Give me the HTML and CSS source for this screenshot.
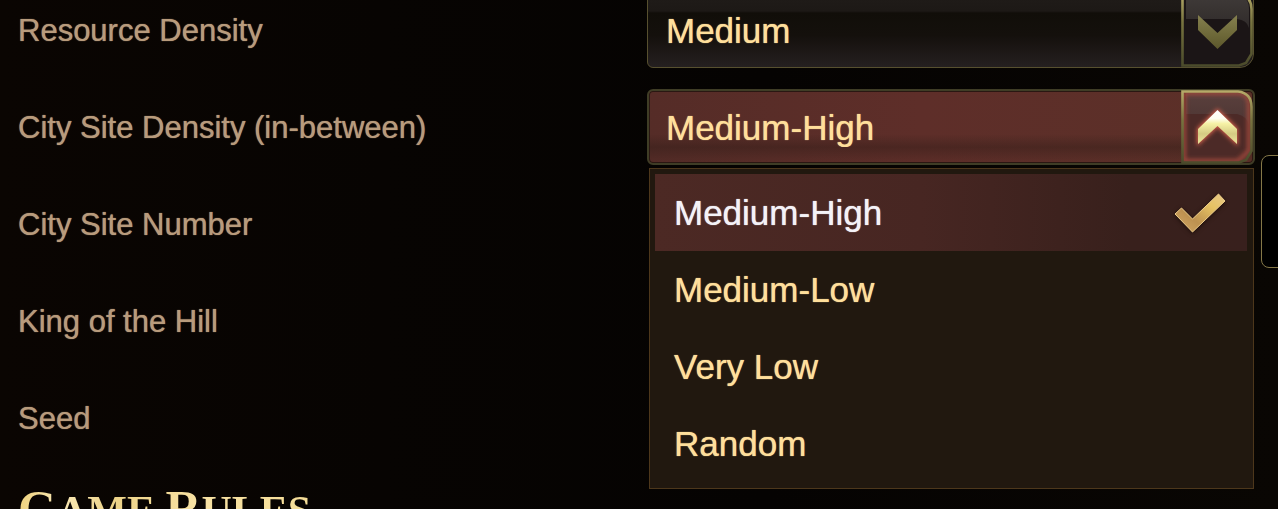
FILE: index.html
```html
<!DOCTYPE html>
<html lang="en">
<head>
    <meta charset="UTF-8">
    <title>Game Setup</title>
    <link rel="stylesheet" href="styles.css">
</head>
<body>
    <main class="settings">
        <div class="row">
            <label for="resource-density">Resource Density</label>
            <div class="dropdown">
                <select id="resource-density">
                    <option>Medium</option>
                </select>
                <svg class="arrow" viewBox="0 0 72 76" aria-hidden="true">
                    <defs>
                        <linearGradient id="frame" x1="0" y1="0" x2="0" y2="1">
                            <stop offset="0" stop-color="#b5aa68"/>
                            <stop offset="0.4" stop-color="#77733f"/>
                            <stop offset="1" stop-color="#4b4b2b"/>
                        </linearGradient>
                        <linearGradient id="shine" x1="0" y1="0" x2="0" y2="1">
                            <stop offset="0" stop-color="#3f3a38"/>
                            <stop offset="1" stop-color="#302b2a"/>
                        </linearGradient>
                        <linearGradient id="olive" x1="0" y1="0" x2="0" y2="1">
                            <stop offset="0" stop-color="#85804f"/>
                            <stop offset="0.6" stop-color="#6d6838"/>
                            <stop offset="1" stop-color="#5c572c"/>
                        </linearGradient>
                    </defs>
                    <path d="M1.5 1.5H57Q70.5 4 70.5 17V62L65 71L58 73.5H1.5Z" fill="#1b1516"/>
                    <path d="M5 4H57Q68 5 68 17V36Q66 28 56 27H5Z" fill="url(#shine)"/>
                    <path d="M1.5 1.5H57Q70.5 4 70.5 17V62L65 71L58 73.5H1.5Z" fill="none" stroke="url(#frame)" stroke-width="2.6"/>
                    <path d="M17 23L36.5 41L56 23V38L36.5 57L17 38Z" fill="url(#olive)"/>
                </svg>
            </div>
        </div>
        <div class="row">
            <label for="site-density">City Site Density (in-between)</label>
            <div class="dropdown open">
                <select id="site-density">
                    <option>Medium-High</option>
                    <option>Medium-Low</option>
                    <option>Very Low</option>
                    <option>Random</option>
                </select>
                <svg class="arrow" viewBox="0 0 72 76" aria-hidden="true">
                    <defs>
                        <linearGradient id="shine-red" x1="0" y1="0" x2="0" y2="1">
                            <stop offset="0" stop-color="#5a403d"/>
                            <stop offset="1" stop-color="#4d3533"/>
                        </linearGradient>
                        <linearGradient id="lit" x1="0" y1="0" x2="0" y2="1">
                            <stop offset="0" stop-color="#ffffff"/>
                            <stop offset="0.25" stop-color="#fffef0"/>
                            <stop offset="0.4" stop-color="#f6f2a6"/>
                            <stop offset="0.7" stop-color="#d5cb83"/>
                            <stop offset="1" stop-color="#eee59c"/>
                        </linearGradient>
                        <filter id="glow" x="-40%" y="-40%" width="180%" height="180%">
                            <feGaussianBlur stdDeviation="2"/>
                        </filter>
                        <clipPath id="inside">
                            <path d="M1.5 2.5H57Q70.5 4 70.5 18V62L65 71L58 73.5H1.5Z"/>
                        </clipPath>
                    </defs>
                    <path d="M1.5 2.5H57Q70.5 4 70.5 18V62L65 71L58 73.5H1.5Z" fill="#4c2a27"/>
                    <path d="M5 4H57Q68 5 68 17V36Q66 27 56 25H5Z" fill="url(#shine-red)"/>
                    <g clip-path="url(#inside)">
                        <path d="M3 3V72H57L68 62V18Q69 4 57 4H3" fill="none" stroke="#a14a3c" stroke-width="4" filter="url(#glow)"/>
                    </g>
                    <path d="M1.5 2.5H57Q70.5 4 70.5 18V62L65 71L58 73.5H1.5Z" fill="none" stroke="url(#frame)" stroke-width="2.6"/>
                    <path d="M17 40L36.5 21L56 40V55L36.5 37L17 55Z" fill="#d5604c" stroke="#d5604c" stroke-width="2" filter="url(#glow)"/>
                    <path d="M17 40L36.5 21L56 40V55L36.5 37L17 55Z" fill="url(#lit)"/>
                </svg>
                <ul class="menu" role="listbox" aria-label="City Site Density (in-between)">
                    <li><button type="button" role="option" aria-selected="true" class="option selected">Medium-High
                        <svg class="check" viewBox="0 0 52 40" aria-hidden="true">
                            <defs>
                                <linearGradient id="gold" x1="0" y1="1" x2="1" y2="0">
                                    <stop offset="0" stop-color="#d5aa68"/>
                                    <stop offset="0.35" stop-color="#bd9150"/>
                                    <stop offset="0.7" stop-color="#e6c263"/>
                                    <stop offset="1" stop-color="#e8c989"/>
                                </linearGradient>
                            </defs>
                            <path d="M1 21L7.5 15L18.5 26L44.5 1L51 8L18.5 39Z" fill="url(#gold)" stroke="#f0cf8d" stroke-width="1"/>
                        </svg>
                    </button></li>
                    <li><button type="button" role="option" aria-selected="false" class="option">Medium-Low</button></li>
                    <li><button type="button" role="option" aria-selected="false" class="option">Very Low</button></li>
                    <li><button type="button" role="option" aria-selected="false" class="option">Random</button></li>
                </ul>
            </div>
        </div>
        <div class="row"><span class="name">City Site Number</span></div>
        <div class="row"><span class="name">King of the Hill</span></div>
        <div class="row"><span class="name">Seed</span></div>
        <h2><span class="cap">G</span>AME <span class="cap">R</span>ULES</h2>
    </main>
    <!-- edge of the next panel -->
    <div class="side-panel"></div>
</body>
</html>
```
FILE: styles.css
```css
* {
    box-sizing: border-box;
}
body {
    margin: 0;
    height: 100vh;
    overflow: hidden;
    position: relative;
    background: linear-gradient(90deg, #0a0502 0%, #070402 30%, #050302 60%, #090603 100%);
    font-family: "Liberation Sans", Arial, sans-serif;
}
/* the list is scrolled a little, so the first row is cut */
.settings {
    display: flex;
    flex-direction: column;
    gap: 21px;
    margin-top: -8px;
    padding: 0 24px 0 18px;
}
.row {
    display: grid;
    grid-template-columns: 1fr 1fr;
    column-gap: 22px;
    align-items: center;
    min-height: 76px;
}
label,
.name {
    padding-top: 2px;
    color: #b89b7c;
    font-size: 31px;
    line-height: 36px;
    text-shadow: 0 0 1px #b89b7c;
}
.dropdown {
    position: relative;
    height: 76px;
}
select {
    appearance: none;
    width: 100%;
    height: 100%;
    margin: 0;
    padding: 0 80px 0 18px;
    border: 1px solid #57502f;
    border-radius: 6px 6px 14px 6px;
    background: linear-gradient(#201c19 0, #1d1916 18px, #110e09 20px, #14100c 42px, #252020 100%);
    color: #ffdf9b;
    font-family: inherit;
    font-size: 35px;
    text-shadow: 0 0 1px #ffdf9b;
}
.open select {
    width: calc(100% + 1px);
    border: 2px solid #3f3d26;
    border-radius: 6px;
    padding-left: 17px;
    background: linear-gradient(rgba(30, 12, 10, 0) 60%, rgba(30, 20, 15, 0.3) 78%, rgba(30, 12, 10, 0) 100%),
        linear-gradient(90deg, #552c27, #5e2e29 45%, #5b3028);
    box-shadow: inset 0 0 0 1px #2a1712;
}
.arrow {
    position: absolute;
    top: 0;
    right: 1px;
    width: 72px;
    height: 76px;
    pointer-events: none;
}
.menu {
    position: absolute;
    top: calc(100% + 3px);
    left: 2px;
    right: 0;
    z-index: 1;
    margin: 0;
    padding: 5px 6px 6px 5px;
    list-style: none;
    border: 1px solid #4d371b;
    background: #21180f;
}
.option {
    display: flex;
    justify-content: space-between;
    align-items: center;
    width: 100%;
    height: 77px;
    padding: 0 21px 0 19px;
    border: 0;
    background: none;
    color: #ffdf9b;
    font-family: inherit;
    font-size: 35px;
    text-align: left;
    text-shadow: 0 0 1px #ffdf9b;
}
.selected {
    background: linear-gradient(90deg, #4c2924, #472622 45%, #38201c 80%, #38201d);
    color: #f4f2f7;
    text-shadow: 0 0 1px #f4f2f7;
}
.check {
    width: 52px;
    height: 40px;
    filter: drop-shadow(0 1px 2px #1c0d08);
}
h2 {
    margin: 1px 0 0;
    font-family: "Liberation Serif", "Times New Roman", serif;
    font-size: 42px;
    line-height: 60px;
    color: transparent;
    background: linear-gradient(100deg, #eed078, #f9e8b6 15%, #edd388 32%, #f8e2a4 60%, #f4dc95) 0 0 / 300px 100%;
    background-clip: text;
    -webkit-background-clip: text;
}
.cap {
    font-size: 50px;
}
.side-panel {
    position: absolute;
    top: 155px;
    right: -20px;
    width: 37px;
    height: 113px;
    border: 1px solid #857848;
    border-radius: 8px;
    background: #000;
}
```
